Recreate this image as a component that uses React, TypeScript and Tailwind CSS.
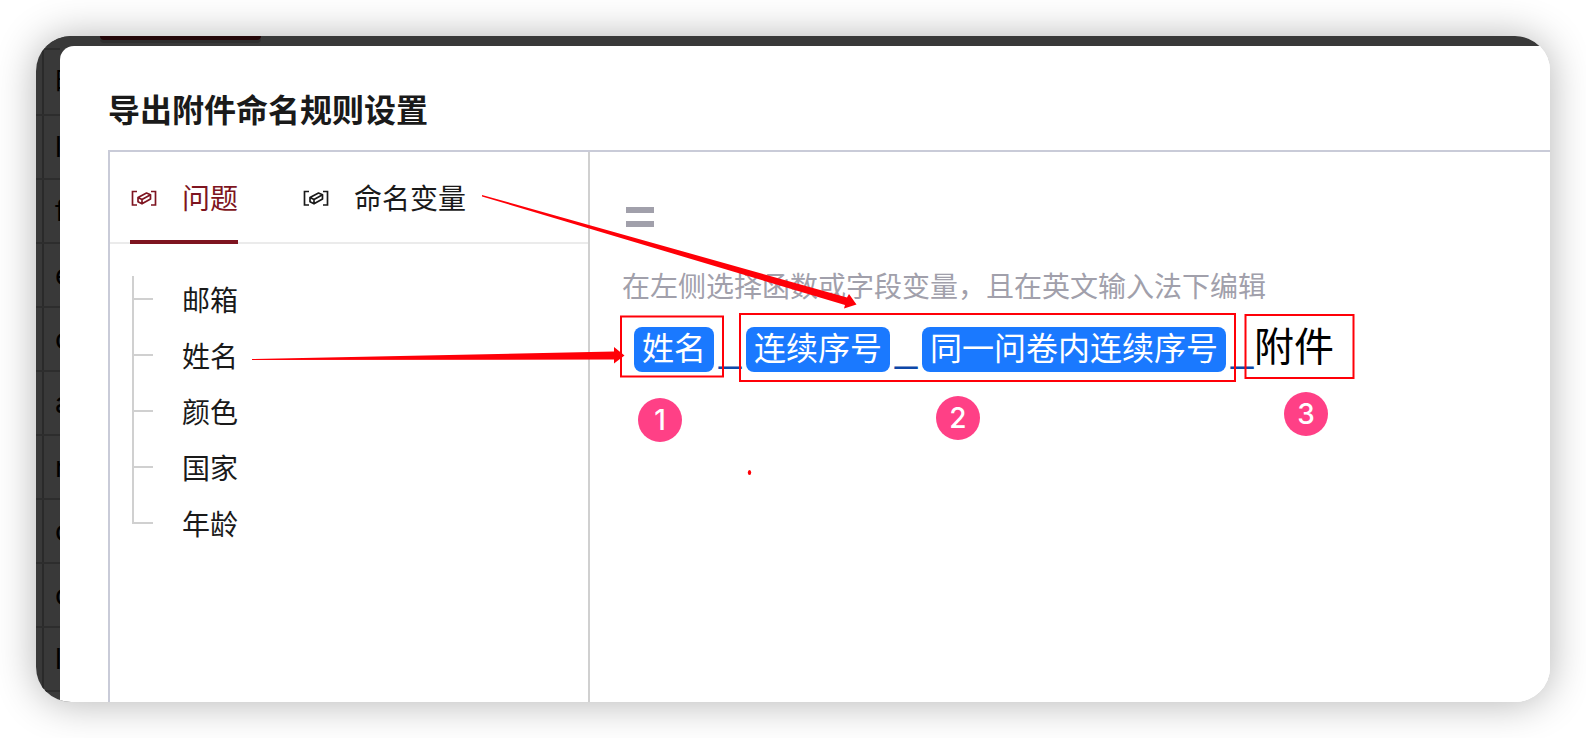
import { useState } from 'react';

type TabKey = 'question' | 'variable';

const tabs: { key: TabKey; label: string }[] = [
  { key: 'question', label: '问题' },
  { key: 'variable', label: '命名变量' },
];

const fields = ['邮箱', '姓名', '颜色', '国家', '年龄'];

const tableRows = ['时', 'l', 'f', 'e', 'c', 'a', 'n', 'c', 'c', 'l'];

function VariableIcon() {
  return (
    <svg
      viewBox="0 0 28 28"
      className="size-7 shrink-0"
      fill="none"
      stroke="currentColor"
      strokeWidth="1.7"
      aria-hidden="true"
    >
      <path d="M7 8.500H2.500v13.500H7M21 8.500h4.500v13.500H21" />
      <path
        d="M8 14.500L16.500 10L20.500 11.800V16L12 20.800L8 18.800zM8 14.500L12 16.500L20.500 11.800M12 16.500V20.800"
        strokeLinejoin="round"
      />
    </svg>
  );
}

function Backdrop() {
  return (
    <div className="w-6 shrink-0 overflow-hidden text-[28px] text-black" aria-hidden="true">
      <div className="h-1 border-b-2 border-[#2d2d2d]" />
      {tableRows.map((text, i) => (
        <div
          key={i}
          className={
            i === 0
              ? 'flex h-[66px] items-center border-b-2 border-[#2d2d2d]'
              : 'flex h-16 items-center border-b-2 border-[#2d2d2d]'
          }
        >
          <span className="h-full w-2 shrink-0 border-r-2 border-[#2a2a2a]" />
          <span className="ml-[11px] font-['Inter','Noto_Sans_CJK_SC',sans-serif]">{text}</span>
        </div>
      ))}
    </div>
  );
}

function FieldTree() {
  return (
    <ul className="pt-7 pl-[22px]">
      {fields.map((field, i) => (
        <li key={field} className="flex h-14 items-start">
          <span className="flex h-14 w-[21px] flex-col">
            <span
              className={
                i === 0
                  ? 'mt-1 h-6 border-b-2 border-l-2 border-[#d0d0d0]'
                  : 'h-7 border-b-2 border-l-2 border-[#d0d0d0]'
              }
            />
            {i < fields.length - 1 && <span className="flex-1 border-l-2 border-[#d0d0d0]" />}
          </span>
          <button type="button" className="ml-[29px] text-[28px] leading-[54px]">
            {field}
          </button>
        </li>
      ))}
    </ul>
  );
}

function Tag({ children }: { children: string }) {
  return (
    <span className="rounded-lg bg-[#1a79ff] px-2 pb-1.5 text-[32px] leading-[39px] text-white">
      {children}
    </span>
  );
}

function Separator() {
  return <span className="w-8 text-center text-[44px] leading-[35px] text-[#0d47a8]">_</span>;
}

function Editor() {
  return (
    <section className="min-w-0 flex-1 pt-[55px] pl-8">
      <div className="ml-1 flex w-7 flex-col gap-2">
        <span className="h-1.5 bg-[#a1a0ab]" />
        <span className="h-1.5 bg-[#a1a0ab]" />
      </div>
      <p className="mt-[38px] text-[28px] leading-10 whitespace-nowrap text-[#a1a0ab]">
        在左侧选择函数或字段变量，且在英文输入法下编辑
      </p>
      <div className="mt-[22px] ml-3 flex items-start whitespace-nowrap">
        <Tag>姓名</Tag>
        <Separator />
        <Tag>连续序号</Tag>
        <Separator />
        <Tag>同一问卷内连续序号</Tag>
        <Separator />
        <span className="-ml-1 text-[40px] leading-[35px] text-black">附件</span>
      </div>
    </section>
  );
}

// Arrows, frames and step badges drawn over the dialog
function Annotations() {
  const badge =
    'absolute flex size-11 items-center justify-center rounded-full bg-[#ff4086] text-[28px] font-medium text-white';

  return (
    <div className="pointer-events-none absolute top-0 left-0 font-['Inter',sans-serif]">
      <svg width="1514" height="666" viewBox="36 36 1514 666" fill="none" aria-hidden="true">
        <g stroke="#ff0008" strokeWidth="2">
          <rect x="621" y="316.500" width="102" height="60" />
          <rect x="740" y="314" width="495" height="67" />
          <rect x="1245.500" y="315" width="108" height="63" />
        </g>
        <g fill="#ff0008">
          <path d="M252 359L614 351.500V347L624.500 355.500L614 363.500V359.500L252 360z" />
          <path d="M482 195L847 297.500L849 294L856.500 304.500L844 308.500L845 305L482 196.500z" />
          <ellipse cx="749.500" cy="472.500" rx="1.700" ry="2.500" />
        </g>
      </svg>
      <span className={`${badge} top-[362px] left-[602px]`}>1</span>
      <span className={`${badge} top-[360px] left-[900px]`}>2</span>
      <span className={`${badge} top-[356px] left-[1248px]`}>3</span>
    </div>
  );
}

export default function App() {
  const [active, setActive] = useState<TabKey>('question');

  return (
    <div className="flex min-h-screen flex-col bg-white p-9 font-['Noto_Sans_CJK_SC',sans-serif] text-[#1a1a1a]">
      <div className="relative flex flex-1 flex-col overflow-hidden rounded-[35px] bg-[linear-gradient(to_right,#393939_50%,#ffffff_50%)] shadow-[0_1px_40px_rgba(0,0,0,0.3)]">
        <div className="h-[10px] shrink-0 bg-[#393939]">
          <div className="ml-16 h-1 w-[161px] rounded-b-lg bg-[#250709] shadow-[0_3px_0_#2f2f2f]" />
        </div>
        <div className="flex h-0 flex-1">
          <Backdrop />
          <main className="flex min-w-0 flex-1 flex-col rounded-tl-[14px] bg-white pt-[42px] pl-12">
            <h1 className="text-[32px] leading-10 font-bold">导出附件命名规则设置</h1>
            <div className="mt-[22px] flex flex-1 border-t-2 border-l-2 border-[#c9cbd8]">
              <aside className="w-[480px] shrink-0 border-r-2 border-[#d0d0d0]">
                <div role="tablist" className="flex h-[92px] gap-16 border-b-2 border-[#ebebeb] pl-5">
                  {tabs.map((tab) => (
                    <button
                      key={tab.key}
                      type="button"
                      role="tab"
                      aria-selected={active === tab.key}
                      onClick={() => setActive(tab.key)}
                      className={
                        active === tab.key
                          ? '-mb-0.5 flex items-center gap-6 border-b-4 border-[#7e1420] pt-0.5 text-[28px] text-[#7e1420]'
                          : '-mb-0.5 flex items-center gap-6 border-b-4 border-transparent pt-0.5 text-[28px]'
                      }
                    >
                      <VariableIcon />
                      {tab.label}
                    </button>
                  ))}
                </div>
                <FieldTree />
              </aside>
              <Editor />
            </div>
          </main>
        </div>
        <Annotations />
      </div>
    </div>
  );
}
